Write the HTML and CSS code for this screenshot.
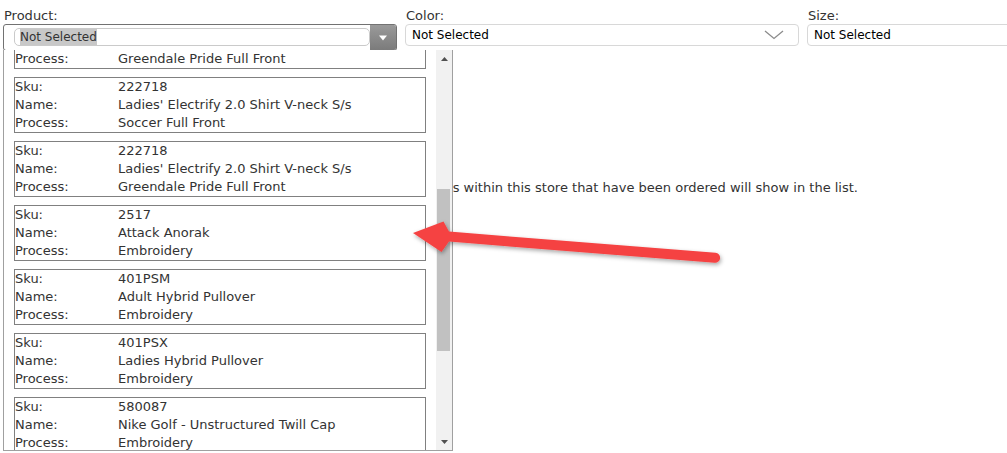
FILE: index.html
```html
<!DOCTYPE html>
<html lang="en">
  <head>
    <meta charset="UTF-8" />
    <title>Store Products</title>
    <link rel="stylesheet" href="styles.css">
  </head>
  <body>
    <div class="filters">
      <div class="filter">
        <label class="filter-label">Product:</label>
        <div class="combo-wrap">
          <div class="combobox">
            <div class="combo-input"><span class="combo-text">Not Selected</span></div>
            <div class="combo-button">
              <svg width="10" height="6" viewBox="0 0 10 6"><polygon points="1,0.5 9,0.5 5,5.5" fill="#fff"/></svg>
            </div>
          </div>

          <div class="combo-list">
            <div class="list-viewport">
              <div class="list-items">
                <div class="item">
                  <span>Sku:</span><span>222718</span>
                  <span>Name:</span><span>Ladies' Electrify 2.0 Shirt V-neck S/s</span>
                  <span>Process:</span><span>Greendale Pride Full Front</span>
                </div>
                <div class="item">
                  <span>Sku:</span><span>222718</span>
                  <span>Name:</span><span>Ladies' Electrify 2.0 Shirt V-neck S/s</span>
                  <span>Process:</span><span>Soccer Full Front</span>
                </div>
                <div class="item">
                  <span>Sku:</span><span>222718</span>
                  <span>Name:</span><span>Ladies' Electrify 2.0 Shirt V-neck S/s</span>
                  <span>Process:</span><span>Greendale Pride Full Front</span>
                </div>
                <div class="item">
                  <span>Sku:</span><span>2517</span>
                  <span>Name:</span><span>Attack Anorak</span>
                  <span>Process:</span><span>Embroidery</span>
                </div>
                <div class="item">
                  <span>Sku:</span><span>401PSM</span>
                  <span>Name:</span><span>Adult Hybrid Pullover</span>
                  <span>Process:</span><span>Embroidery</span>
                </div>
                <div class="item">
                  <span>Sku:</span><span>401PSX</span>
                  <span>Name:</span><span>Ladies Hybrid Pullover</span>
                  <span>Process:</span><span>Embroidery</span>
                </div>
                <div class="item">
                  <span>Sku:</span><span>580087</span>
                  <span>Name:</span><span>Nike Golf - Unstructured Twill Cap</span>
                  <span>Process:</span><span>Embroidery</span>
                </div>
              </div>
            </div>
            <div class="scrollbar">
              <div class="scroll-btn">
                <svg width="7" height="4" viewBox="0 0 7 4"><polygon points="0,4 7,4 3.5,0" fill="#505050"/></svg>
              </div>
              <div class="scroll-track"><div class="scroll-thumb"></div></div>
              <div class="scroll-btn">
                <svg width="7" height="4" viewBox="0 0 7 4"><polygon points="0,0 7,0 3.5,4" fill="#505050"/></svg>
              </div>
            </div>
          </div>
        </div>
      </div>

      <div class="filter">
        <label class="filter-label">Color:</label>
        <div class="select">
          <span>Not Selected</span>
          <svg width="20" height="10" viewBox="0 0 20 10"><polyline points="1,1 10,8.5 19,1" fill="none" stroke="#8c8c8c" stroke-width="1.3"/></svg>
        </div>
      </div>

      <div class="filter">
        <label class="filter-label">Size:</label>
        <div class="select">
          <span>Not Selected</span>
        </div>
      </div>
    </div>

    <div class="note">
      <span>Only products with sizes and colors from the designs within this store that have been ordered will show in the list.</span>
    </div>

    <svg class="arrow" width="1007" height="453" viewBox="0 0 1007 453">
      <defs>
        <filter id="shadow" x="-10%" y="-50%" width="120%" height="200%">
          <feDropShadow dx="1" dy="2" stdDeviation="2" flood-color="#000" flood-opacity="0.35"/>
        </filter>
      </defs>
      <path filter="url(#shadow)" fill="#f54242"
        d="M413,233 L443.5,221.5 L449,231.6 L715.5,252.8 A5,5 0 0 1 714.7,262.8 L449,241.6 L441.5,252 Z"/>
    </svg>
  </body>
</html>
```

FILE: styles.css
```css
html,
body {
  margin: 0;
  overflow: hidden;
  height: 100%;
}

body {
  font-family: "DejaVu Sans", Verdana, sans-serif;
  font-size: 13px;
  color: #333;
  background: white;
  position: relative;
}

.filters {
  display: grid;
  grid-template-columns: repeat(3, 394px);
  column-gap: 8px;
  padding: 8px 0 0 3px;
}

.filter-label {
  display: block;
  line-height: 16px;
  padding-left: 1px;
}

.combo-wrap {
  position: relative;
}

.combobox {
  display: flex;
  height: 27px;
  box-sizing: border-box;
  border: 1px solid #727272;
  border-radius: 3px;
  background: white;
}

.combo-input {
  flex: 1;
  margin: 3px 0 4px 10px;
  border: 1px solid #cacaca;
  border-radius: 5px;
  padding-left: 5px;
  display: flex;
  align-items: center;
  font-size: 12px;
}

.combo-text {
  background: #c8c8c8;
  line-height: 16px;
}

.combo-button {
  width: 26px;
  background: linear-gradient(#9a9a9a, #7b7b7b);
  display: flex;
  align-items: center;
  justify-content: center;
  border-radius: 0 2px 2px 0;
}

.combo-list {
  position: absolute;
  top: 26px;
  left: 0;
  width: 450px;
  height: 401px;
  box-sizing: border-box;
  border: 1px solid #a0a0a0;
  border-top: none;
  background: white;
  display: flex;
  z-index: 5;
}

.list-viewport {
  flex: 1;
  overflow: hidden;
  padding: 0 10px;
}

.list-items {
  display: flex;
  flex-direction: column;
  gap: 8px;
  margin-top: -37px;
}

.item {
  display: grid;
  grid-template-columns: 103px 1fr;
  line-height: 18px;
  border: 1px solid #808080;
  white-space: nowrap;
}

.scrollbar {
  width: 16px;
  background: #f1f1f1;
  display: flex;
  flex-direction: column;
}

.scroll-btn {
  height: 17px;
  display: flex;
  align-items: center;
  justify-content: center;
}

.scroll-track {
  flex: 1;
}

.scroll-thumb {
  margin: 122px 0 0 1px;
  width: 13px;
  height: 162px;
  background: #c1c1c1;
}

.select {
  display: flex;
  align-items: center;
  justify-content: space-between;
  height: 22px;
  box-sizing: border-box;
  border: 1px solid #d8d8d8;
  border-radius: 4px;
  padding: 0 14px 0 6px;
  color: #000;
  font-size: 12px;
}

.note {
  display: flex;
  justify-content: flex-end;
  margin: 129px 149px 0 0;
  line-height: 16px;
  white-space: nowrap;
}

.arrow {
  position: absolute;
  top: 0;
  left: 0;
  z-index: 10;
  pointer-events: none;
}
```
